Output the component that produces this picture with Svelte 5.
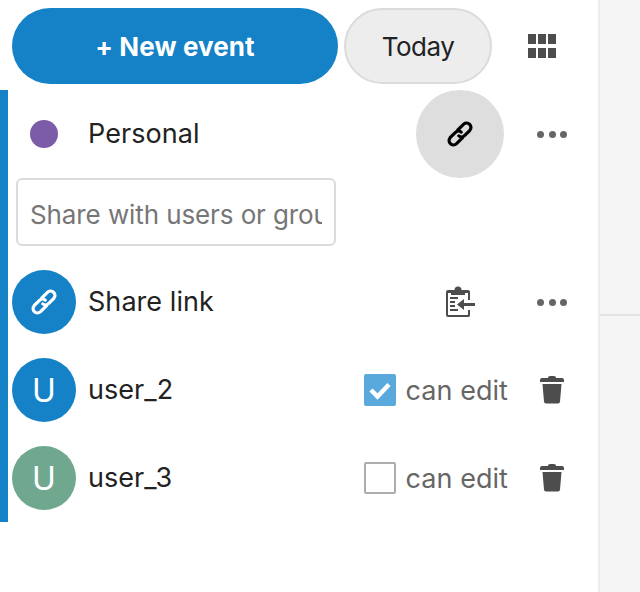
<script>
  const users = [
    { name: 'user_2', color: '#1581c7', checked: true },
    { name: 'user_3', color: '#6fa78f', checked: false }
  ];
</script>

<div class="app">
  <aside class="sidebar">
    <div class="header">
      <button class="new-event">+ New event</button>
      <button class="today">Today</button>
      <div class="view-toggle">
        <div class="grid-icon">
          {#each Array(6) as _}
            <span></span>
          {/each}
        </div>
      </div>
    </div>

    <section class="calendar">
      <div class="row">
        <span class="avatar"><span class="dot"></span></span>
        <span class="name">Personal</span>
        <button class="action active" aria-label="Share">
          <svg width="28" height="28" viewBox="0 0 28 28" fill="none" stroke="#000" stroke-width="3.200" stroke-linecap="round">
            <path d="M11.600 10.200 17.700 4.100a4.400 4.400 0 0 1 6.200 6.200L18.500 15.700a4.200 4.200 0 0 1-5.700.2" />
            <path d="M16.400 17.800 10.300 23.900a4.400 4.400 0 0 1-6.200-6.200L9.500 12.300a4.200 4.200 0 0 1 5.700-.2" />
          </svg>
        </button>
        <button class="action" aria-label="More">
          <span class="dots"><i></i><i></i><i></i></span>
        </button>
      </div>

      <div class="search"><input type="text" placeholder="Share with users or groups" /></div>

      <div class="row">
        <span class="avatar">
          <span class="circle blue">
            <svg width="28" height="28" viewBox="0 0 28 28" fill="none" stroke="#fff" stroke-width="3.200" stroke-linecap="round">
              <path d="M11.600 10.200 17.700 4.100a4.400 4.400 0 0 1 6.200 6.200L18.500 15.700a4.200 4.200 0 0 1-5.700.2" />
              <path d="M16.400 17.800 10.300 23.900a4.400 4.400 0 0 1-6.200-6.200L9.500 12.300a4.200 4.200 0 0 1 5.700-.2" />
            </svg>
          </span>
        </span>
        <span class="name">Share link</span>
        <button class="action" aria-label="Copy link">
          <svg width="30" height="32" viewBox="0 0 30 32">
            <path d="M3 4h6.500a3.500 3.500 0 0 1 7 0H23a2 2 0 0 1 2 1.500V14h-2V7h-3v2H6V7H3v22h20v-5h2v5.500a2 2 0 0 1-2 1.500H3a2 2 0 0 1-2-2V6a2 2 0 0 1 2-2z" fill="#4d4d4d" />
            <path d="M5 11h8v2H5zM5 15h5v2H5zM5 19h5v2H5zM5 23h8v2H5z" fill="#4d4d4d" />
            <path d="M12 18.500 19 13v4h11v3H19v4z" fill="#4d4d4d" />
          </svg>
        </button>
        <button class="action" aria-label="More">
          <span class="dots"><i></i><i></i><i></i></span>
        </button>
      </div>

      {#each users as user}
        <div class="row">
          <span class="avatar"><span class="circle" style="background: {user.color}">U</span></span>
          <span class="name">{user.name}</span>
          <label class="perm">
            <span class="box" class:checked={user.checked}>
              {#if user.checked}
                <svg width="28" height="28" viewBox="0 0 28 28" fill="none" stroke="#fff" stroke-width="4.500">
                  <path d="M5 14 11.500 20.500 23 8.500" />
                </svg>
              {/if}
            </span>
            can edit
          </label>
          <button class="action" aria-label="Delete">
            <svg width="24" height="28" viewBox="0 0 24 28" fill="#4d4d4d">
              <path d="M8 1.500Q8 0 10 0h4q2 0 2 1.500V2h6q2 0 2 2v2H0V4q0-2 2-2h6z" />
              <path d="M2.500 8h19L20 25.500Q19.800 27.500 18 27.500H6q-1.800 0-2-2z" />
            </svg>
          </button>
        </div>
      {/each}
    </section>
  </aside>

  <main class="pane">
    <div class="pane-top"></div>
  </main>
</div>

<style>
  :global(body) {
    margin: 0;
    background: #fff;
  }

  .app {
    display: flex;
    height: 592px;
    font-family: Inter, "Liberation Sans", sans-serif;
    font-size: 27px;
    letter-spacing: 0.05px;
    color: #222;
  }

  .sidebar {
    width: 598px;
    flex: none;
  }

  .header {
    display: flex;
    align-items: center;
    gap: 6px;
    height: 76px;
    padding: 8px 0 6px 12px;
  }

  button {
    font: inherit;
    letter-spacing: inherit;
    color: inherit;
    padding: 0;
    border: none;
    background: none;
  }

  .new-event {
    width: 326px;
    height: 76px;
    border-radius: 38px;
    background: #1581c7;
    color: #fff;
    font-size: 26px;
    font-weight: 700;
    letter-spacing: 0.1px;
  }

  .today {
    width: 148px;
    height: 76px;
    border-radius: 38px;
    background: #ededed;
    border: 2px solid #dbdbdb;
    font-size: 26px;
    letter-spacing: -0.5px;
  }

  .view-toggle {
    flex: 1;
    display: flex;
    justify-content: center;
    margin-right: 12px;
  }

  .grid-icon {
    display: grid;
    grid-template-columns: repeat(3, 8px);
    grid-template-rows: repeat(2, 10px);
    gap: 4px 2px;
  }

  .grid-icon span {
    background: #4d4d4d;
  }

  .calendar {
    border-left: 8px solid #1581c7;
    height: 432px;
    box-sizing: border-box;
  }

  .row {
    display: flex;
    align-items: center;
    height: 88px;
  }

  .avatar {
    width: 64px;
    margin-left: 4px;
    margin-right: 12px;
    display: flex;
    justify-content: center;
  }

  .dot {
    width: 28px;
    height: 28px;
    border-radius: 50%;
    background: #7c5ca8;
  }

  .circle {
    width: 64px;
    height: 64px;
    border-radius: 50%;
    display: flex;
    align-items: center;
    justify-content: center;
    color: #fff;
    font-size: 32px;
  }

  .circle.blue {
    background: #1581c7;
  }

  .name {
    flex: 1;
    margin-top: -1px;
  }

  .action {
    width: 88px;
    height: 88px;
    flex: none;
    display: flex;
    align-items: center;
    justify-content: center;
    border-radius: 50%;
    margin-right: 2px;
  }

  .action + .action {
    margin-left: 2px;
  }

  .action.active {
    background: #dedede;
  }

  .dots {
    display: flex;
    gap: 4.5px;
  }

  .dots i {
    width: 7px;
    height: 7px;
    border-radius: 50%;
    background: #666;
  }

  .search {
    padding: 0 0 12px 8px;
  }

  input {
    display: block;
    width: 320px;
    height: 68px;
    box-sizing: border-box;
    border: 2px solid #dbdbdb;
    border-radius: 6px;
    padding: 4px 12px 0;
    font: inherit;
    font-size: 26px;
    letter-spacing: -0.1px;
    outline: none;
  }

  input::placeholder {
    color: #767676;
    opacity: 1;
  }

  .perm {
    display: flex;
    align-items: center;
    gap: 10px;
    color: #666;
  }

  .box {
    width: 32px;
    height: 32px;
    box-sizing: border-box;
    border: 2px solid #adadad;
    border-radius: 2px;
    display: flex;
    align-items: center;
    justify-content: center;
  }

  .box.checked {
    background: #5aa9dc;
    border-color: #5aa9dc;
  }

  .pane {
    flex: 1;
    background: #f5f5f5;
    border-left: 2px solid #ededed;
  }

  .pane-top {
    height: 314px;
    border-bottom: 2px solid #e3e3e3;
  }
</style>
